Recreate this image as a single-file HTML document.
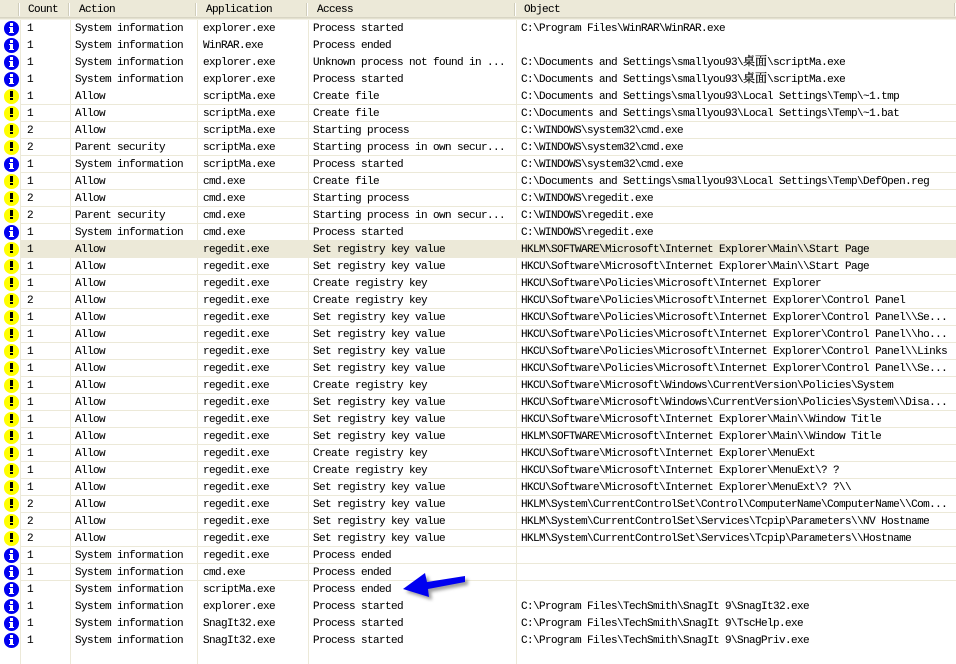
<!DOCTYPE html>
<html><head><meta charset="utf-8"><style>
html,body{margin:0;padding:0;background:#fff}
#p{position:relative;width:956px;height:664px;overflow:hidden;background:#fff;font:11px/17px "Liberation Mono","Noto Serif CJK SC",monospace;letter-spacing:-.6px;color:#000;-webkit-text-stroke:.06px #000}
#h{position:absolute;left:0;top:0;width:956px;height:17px;background:#ece9d8;border-bottom:1px solid #d8d5c4;box-shadow:0 1px 0 #e4e1cf,0 2px 0 #f4f2e8}
#h b{position:absolute;top:3px;width:1px;height:13px;background:#d0cdbb;border-right:1px solid #fff}
#h span{position:absolute;top:3px;line-height:15px}
.v{position:absolute;top:20px;bottom:0;width:1px;background:#ece9d8}
.r{position:absolute;left:20px;width:936px;height:17px;box-sizing:border-box}
.l{border-bottom:1px solid #ece9d8}
.s{background:#ece9d8}
.r span{position:absolute;top:1px;white-space:pre}
em{font-style:normal;font-size:12px;line-height:1;letter-spacing:0;font-family:"Noto Serif CJK SC",serif;-webkit-text-stroke:.2px #000}
.c{left:7px}.a{left:55px}.p{left:183px}.x{left:293px}.o{left:501px}
.n,.w{position:absolute;left:-16px;top:1px;width:15px;height:14.5px;border-radius:50%}
.n{background:#0000f0}.w{background:#ffff00}
.n:before{content:"";position:absolute;left:6px;top:2px;width:3px;height:3px;background:#fff}
.n:after{content:"";position:absolute;left:5px;top:6px;width:6px;height:6px;background:linear-gradient(#fff,#fff) 1px 0/3px 6px no-repeat,linear-gradient(#fff,#fff) 0 5px/5px 1px no-repeat,linear-gradient(#fff,#fff) 0 0/2px 1px no-repeat}
.w:before{content:"";position:absolute;left:6px;top:2px;width:3px;height:6px;background:#000}
.w:after{content:"";position:absolute;left:6px;top:9px;width:3px;height:2px;background:#000}
svg{position:absolute;left:0;top:0}
</style></head><body><div id="p">
<div class="v" style="left:20px"></div><div class="v" style="left:70px"></div><div class="v" style="left:197px"></div><div class="v" style="left:308px"></div><div class="v" style="left:516px"></div>
<div id="h"><b style="left:18px"></b><b style="left:68px"></b><b style="left:195px"></b><b style="left:306px"></b><b style="left:514px"></b><b style="left:954px"></b>
<span style="left:28px">Count</span><span style="left:79px">Action</span><span style="left:206px">Application</span><span style="left:317px">Access</span><span style="left:524px">Object</span></div>

<div class="r" style="top:20px"><i class="n"></i><span class="c">1</span><span class="a">System information</span><span class="p">explorer.exe</span><span class="x">Process started</span><span class="o">C:\Program Files\WinRAR\WinRAR.exe</span></div>
<div class="r" style="top:37px"><i class="n"></i><span class="c">1</span><span class="a">System information</span><span class="p">WinRAR.exe</span><span class="x">Process ended</span></div>
<div class="r" style="top:54px"><i class="n"></i><span class="c">1</span><span class="a">System information</span><span class="p">explorer.exe</span><span class="x">Unknown process not found in ...</span><span class="o">C:\Documents and Settings\smallyou93\<em>桌面</em>\scriptMa.exe</span></div>
<div class="r" style="top:71px"><i class="n"></i><span class="c">1</span><span class="a">System information</span><span class="p">explorer.exe</span><span class="x">Process started</span><span class="o">C:\Documents and Settings\smallyou93\<em>桌面</em>\scriptMa.exe</span></div>
<div class="r l" style="top:88px"><i class="w"></i><span class="c">1</span><span class="a">Allow</span><span class="p">scriptMa.exe</span><span class="x">Create file</span><span class="o">C:\Documents and Settings\smallyou93\Local Settings\Temp\~1.tmp</span></div>
<div class="r l" style="top:105px"><i class="w"></i><span class="c">1</span><span class="a">Allow</span><span class="p">scriptMa.exe</span><span class="x">Create file</span><span class="o">C:\Documents and Settings\smallyou93\Local Settings\Temp\~1.bat</span></div>
<div class="r l" style="top:122px"><i class="w"></i><span class="c">2</span><span class="a">Allow</span><span class="p">scriptMa.exe</span><span class="x">Starting process</span><span class="o">C:\WINDOWS\system32\cmd.exe</span></div>
<div class="r l" style="top:139px"><i class="w"></i><span class="c">2</span><span class="a">Parent security</span><span class="p">scriptMa.exe</span><span class="x">Starting process in own secur...</span><span class="o">C:\WINDOWS\system32\cmd.exe</span></div>
<div class="r l" style="top:156px"><i class="n"></i><span class="c">1</span><span class="a">System information</span><span class="p">scriptMa.exe</span><span class="x">Process started</span><span class="o">C:\WINDOWS\system32\cmd.exe</span></div>
<div class="r l" style="top:173px"><i class="w"></i><span class="c">1</span><span class="a">Allow</span><span class="p">cmd.exe</span><span class="x">Create file</span><span class="o">C:\Documents and Settings\smallyou93\Local Settings\Temp\DefOpen.reg</span></div>
<div class="r l" style="top:190px"><i class="w"></i><span class="c">2</span><span class="a">Allow</span><span class="p">cmd.exe</span><span class="x">Starting process</span><span class="o">C:\WINDOWS\regedit.exe</span></div>
<div class="r l" style="top:207px"><i class="w"></i><span class="c">2</span><span class="a">Parent security</span><span class="p">cmd.exe</span><span class="x">Starting process in own secur...</span><span class="o">C:\WINDOWS\regedit.exe</span></div>
<div class="r l" style="top:224px"><i class="n"></i><span class="c">1</span><span class="a">System information</span><span class="p">cmd.exe</span><span class="x">Process started</span><span class="o">C:\WINDOWS\regedit.exe</span></div>
<div class="r s" style="top:241px"><i class="w"></i><span class="c">1</span><span class="a">Allow</span><span class="p">regedit.exe</span><span class="x">Set registry key value</span><span class="o">HKLM\SOFTWARE\Microsoft\Internet Explorer\Main\\Start Page</span></div>
<div class="r l" style="top:258px"><i class="w"></i><span class="c">1</span><span class="a">Allow</span><span class="p">regedit.exe</span><span class="x">Set registry key value</span><span class="o">HKCU\Software\Microsoft\Internet Explorer\Main\\Start Page</span></div>
<div class="r l" style="top:275px"><i class="w"></i><span class="c">1</span><span class="a">Allow</span><span class="p">regedit.exe</span><span class="x">Create registry key</span><span class="o">HKCU\Software\Policies\Microsoft\Internet Explorer</span></div>
<div class="r l" style="top:292px"><i class="w"></i><span class="c">2</span><span class="a">Allow</span><span class="p">regedit.exe</span><span class="x">Create registry key</span><span class="o">HKCU\Software\Policies\Microsoft\Internet Explorer\Control Panel</span></div>
<div class="r l" style="top:309px"><i class="w"></i><span class="c">1</span><span class="a">Allow</span><span class="p">regedit.exe</span><span class="x">Set registry key value</span><span class="o">HKCU\Software\Policies\Microsoft\Internet Explorer\Control Panel\\Se...</span></div>
<div class="r l" style="top:326px"><i class="w"></i><span class="c">1</span><span class="a">Allow</span><span class="p">regedit.exe</span><span class="x">Set registry key value</span><span class="o">HKCU\Software\Policies\Microsoft\Internet Explorer\Control Panel\\ho...</span></div>
<div class="r l" style="top:343px"><i class="w"></i><span class="c">1</span><span class="a">Allow</span><span class="p">regedit.exe</span><span class="x">Set registry key value</span><span class="o">HKCU\Software\Policies\Microsoft\Internet Explorer\Control Panel\\Links</span></div>
<div class="r l" style="top:360px"><i class="w"></i><span class="c">1</span><span class="a">Allow</span><span class="p">regedit.exe</span><span class="x">Set registry key value</span><span class="o">HKCU\Software\Policies\Microsoft\Internet Explorer\Control Panel\\Se...</span></div>
<div class="r l" style="top:377px"><i class="w"></i><span class="c">1</span><span class="a">Allow</span><span class="p">regedit.exe</span><span class="x">Create registry key</span><span class="o">HKCU\Software\Microsoft\Windows\CurrentVersion\Policies\System</span></div>
<div class="r l" style="top:394px"><i class="w"></i><span class="c">1</span><span class="a">Allow</span><span class="p">regedit.exe</span><span class="x">Set registry key value</span><span class="o">HKCU\Software\Microsoft\Windows\CurrentVersion\Policies\System\\Disa...</span></div>
<div class="r l" style="top:411px"><i class="w"></i><span class="c">1</span><span class="a">Allow</span><span class="p">regedit.exe</span><span class="x">Set registry key value</span><span class="o">HKCU\Software\Microsoft\Internet Explorer\Main\\Window Title</span></div>
<div class="r l" style="top:428px"><i class="w"></i><span class="c">1</span><span class="a">Allow</span><span class="p">regedit.exe</span><span class="x">Set registry key value</span><span class="o">HKLM\SOFTWARE\Microsoft\Internet Explorer\Main\\Window Title</span></div>
<div class="r l" style="top:445px"><i class="w"></i><span class="c">1</span><span class="a">Allow</span><span class="p">regedit.exe</span><span class="x">Create registry key</span><span class="o">HKCU\Software\Microsoft\Internet Explorer\MenuExt</span></div>
<div class="r l" style="top:462px"><i class="w"></i><span class="c">1</span><span class="a">Allow</span><span class="p">regedit.exe</span><span class="x">Create registry key</span><span class="o">HKCU\Software\Microsoft\Internet Explorer\MenuExt\? ?</span></div>
<div class="r l" style="top:479px"><i class="w"></i><span class="c">1</span><span class="a">Allow</span><span class="p">regedit.exe</span><span class="x">Set registry key value</span><span class="o">HKCU\Software\Microsoft\Internet Explorer\MenuExt\? ?\\</span></div>
<div class="r l" style="top:496px"><i class="w"></i><span class="c">2</span><span class="a">Allow</span><span class="p">regedit.exe</span><span class="x">Set registry key value</span><span class="o">HKLM\System\CurrentControlSet\Control\ComputerName\ComputerName\\Com...</span></div>
<div class="r l" style="top:513px"><i class="w"></i><span class="c">2</span><span class="a">Allow</span><span class="p">regedit.exe</span><span class="x">Set registry key value</span><span class="o">HKLM\System\CurrentControlSet\Services\Tcpip\Parameters\\NV Hostname</span></div>
<div class="r l" style="top:530px"><i class="w"></i><span class="c">2</span><span class="a">Allow</span><span class="p">regedit.exe</span><span class="x">Set registry key value</span><span class="o">HKLM\System\CurrentControlSet\Services\Tcpip\Parameters\\Hostname</span></div>
<div class="r l" style="top:547px"><i class="n"></i><span class="c">1</span><span class="a">System information</span><span class="p">regedit.exe</span><span class="x">Process ended</span></div>
<div class="r l" style="top:564px"><i class="n"></i><span class="c">1</span><span class="a">System information</span><span class="p">cmd.exe</span><span class="x">Process ended</span></div>
<div class="r" style="top:581px"><i class="n"></i><span class="c">1</span><span class="a">System information</span><span class="p">scriptMa.exe</span><span class="x">Process ended</span></div>
<div class="r" style="top:598px"><i class="n"></i><span class="c">1</span><span class="a">System information</span><span class="p">explorer.exe</span><span class="x">Process started</span><span class="o">C:\Program Files\TechSmith\SnagIt 9\SnagIt32.exe</span></div>
<div class="r" style="top:615px"><i class="n"></i><span class="c">1</span><span class="a">System information</span><span class="p">SnagIt32.exe</span><span class="x">Process started</span><span class="o">C:\Program Files\TechSmith\SnagIt 9\TscHelp.exe</span></div>
<div class="r" style="top:632px"><i class="n"></i><span class="c">1</span><span class="a">System information</span><span class="p">SnagIt32.exe</span><span class="x">Process started</span><span class="o">C:\Program Files\TechSmith\SnagIt 9\SnagPriv.exe</span></div>

<svg width="956" height="664" viewBox="0 0 956 664">
<defs><filter id="b" x="-20%" y="-40%" width="140%" height="180%"><feGaussianBlur stdDeviation="1.6"/></filter></defs>
<path d="M403 589L425 573L427 582L465 576L465 582L428 589L429 597Z" fill="#777" opacity=".7" filter="url(#b)" transform="translate(3 3)"/>
<path d="M403 589L425 573L427 582L465 576L465 582L428 589L429 597Z" fill="#0000f0"/>
</svg>
</div></body></html>
